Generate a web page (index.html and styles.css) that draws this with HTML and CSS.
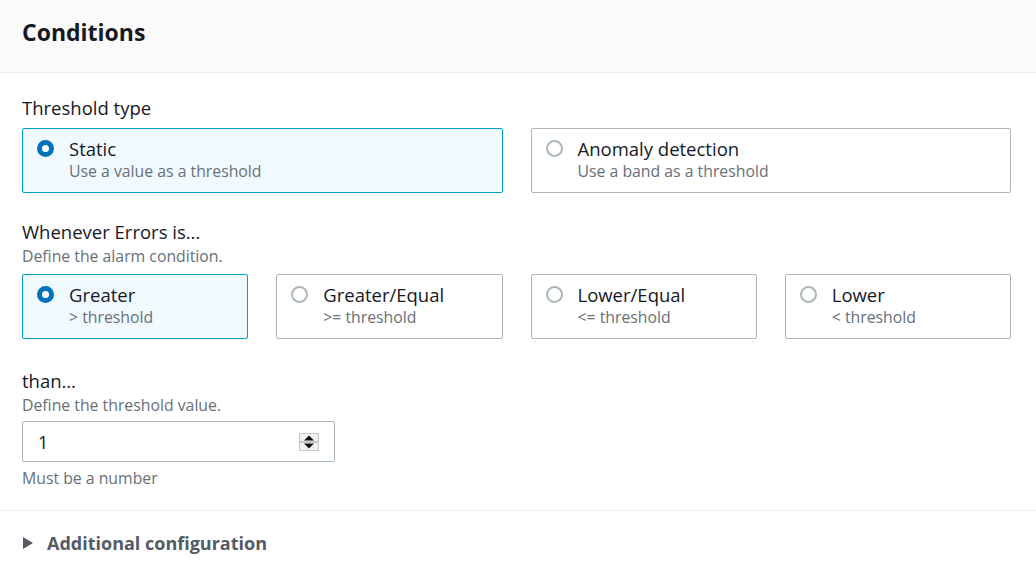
FILE: index.html
```html
<!DOCTYPE html>
<html>
<head>
<meta charset="utf-8">
<link rel="stylesheet" href="styles.css">
</head>
<body>
<div class="panel">
  <div class="header"><h2 class="title">Conditions</h2></div>
  <div class="content">
    <div class="field">
      <div class="label">Threshold type</div>
      <div class="tiles tiles-2">
        <div class="tile selected">
          <span class="radio on"></span>
          <div class="tile-text"><div class="tile-label">Static</div><div class="tile-desc">Use a value as a threshold</div></div>
        </div>
        <div class="tile">
          <span class="radio"></span>
          <div class="tile-text"><div class="tile-label">Anomaly detection</div><div class="tile-desc">Use a band as a threshold</div></div>
        </div>
      </div>
    </div>
    <div class="field field-op">
      <div class="label">Whenever Errors is...</div>
      <div class="hint">Define the alarm condition.</div>
      <div class="tiles tiles-4">
        <div class="tile selected">
          <span class="radio on"></span>
          <div class="tile-text"><div class="tile-label">Greater</div><div class="tile-desc">&gt; threshold</div></div>
        </div>
        <div class="tile">
          <span class="radio"></span>
          <div class="tile-text"><div class="tile-label">Greater/Equal</div><div class="tile-desc">&gt;= threshold</div></div>
        </div>
        <div class="tile">
          <span class="radio"></span>
          <div class="tile-text"><div class="tile-label">Lower/Equal</div><div class="tile-desc">&lt;= threshold</div></div>
        </div>
        <div class="tile">
          <span class="radio"></span>
          <div class="tile-text"><div class="tile-label">Lower</div><div class="tile-desc">&lt; threshold</div></div>
        </div>
      </div>
    </div>
    <div class="field field-value">
      <div class="label">than…</div>
      <div class="hint">Define the threshold value.</div>
      <div class="input">
        <span class="input-value">1</span>
        <span class="spinner">
          <svg width="20" height="18" viewBox="0 0 20 18">
            <rect x="0.5" y="0.5" width="19" height="17" fill="#f0f0f0" stroke="#c8c8c8"/>
            <line x1="1" y1="9" x2="19" y2="9" stroke="#a0a0a0"/>
            <polygon points="10,2.5 15,7.5 5,7.5" fill="#111"/>
            <polygon points="10,15.5 15,10.5 5,10.5" fill="#111"/>
          </svg>
        </span>
      </div>
      <div class="constraint">Must be a number</div>
    </div>
  </div>
  <div class="footer">
    <svg class="caret" width="12" height="14" viewBox="0 0 12 14"><polygon points="1,1 11,7 1,13" fill="#545b64"/></svg>
    <span class="footer-label">Additional configuration</span>
  </div>
</div>
</body>
</html>
```
FILE: styles.css
```css
* { box-sizing: border-box; }
html, body { margin: 0; padding: 0; background: #fff; }
body { font-family: "Open Sans", "Noto Sans", sans-serif; color: #16191f; }
.panel { width: 1036px; }
.header {
  background: #fafafa;
  border-bottom: 1px solid #eaeded;
  height: 73px;
  padding: 0 22px;
  display: flex;
  align-items: center;
}
.title { margin: 0; font-size: 23px; font-weight: 700; line-height: 1; padding-bottom: 8px; }
.content { padding: 22px 25px 0 22px; display: flex; flex-direction: column; }
.field-op { margin-top: 26px; }
.field-value { margin-top: 29px; }
.label { font-size: 18.5px; line-height: 25px; }
.hint { font-size: 15.8px; line-height: 20px; color: #687078; margin-top: 2px; }
.field .tiles { margin-top: 8px; }
.tiles { display: grid; gap: 28px; }
.tiles-2 { grid-template-columns: 1fr 1fr; }
.tiles-4 { grid-template-columns: repeat(4, 1fr); }
.tile {
  border: 1px solid #aab7b8;
  border-radius: 2px;
  height: 65px;
  display: flex;
  padding: 8px 14px 0;
  gap: 15px;
}
.tile.selected { border-color: #00a1c9; background: #f1faff; }
.radio {
  width: 17px; height: 17px;
  border-radius: 50%;
  border: 2px solid #aab7b8;
  background: #fff;
  flex: none;
  margin-top: 3px;
}
.radio.on { border: 5px solid #0073bb; }
.tile-label { font-size: 18.5px; line-height: 23px; }
.tile-desc { font-size: 15.8px; line-height: 23px; color: #687078; }
.input {
  margin-top: 6px;
  width: 313px; height: 41px;
  border: 1px solid #aab7b8;
  border-radius: 2px;
  display: flex;
  align-items: center;
  justify-content: space-between;
  padding: 0 15px 0 15px;
}
.input-value { font-size: 18px; }
.spinner { display: flex; }
.constraint { font-size: 15.8px; line-height: 20px; color: #687078; margin-top: 6px; }
.footer {
  margin-top: 22px;
  border-top: 1px solid #eaeded;
  height: 56px;
  padding: 9px 22px 0;
  display: flex;
  align-items: center;
  gap: 13px;
  color: #545b64;
}
.footer-label { font-size: 18px; font-weight: 700; }
```
